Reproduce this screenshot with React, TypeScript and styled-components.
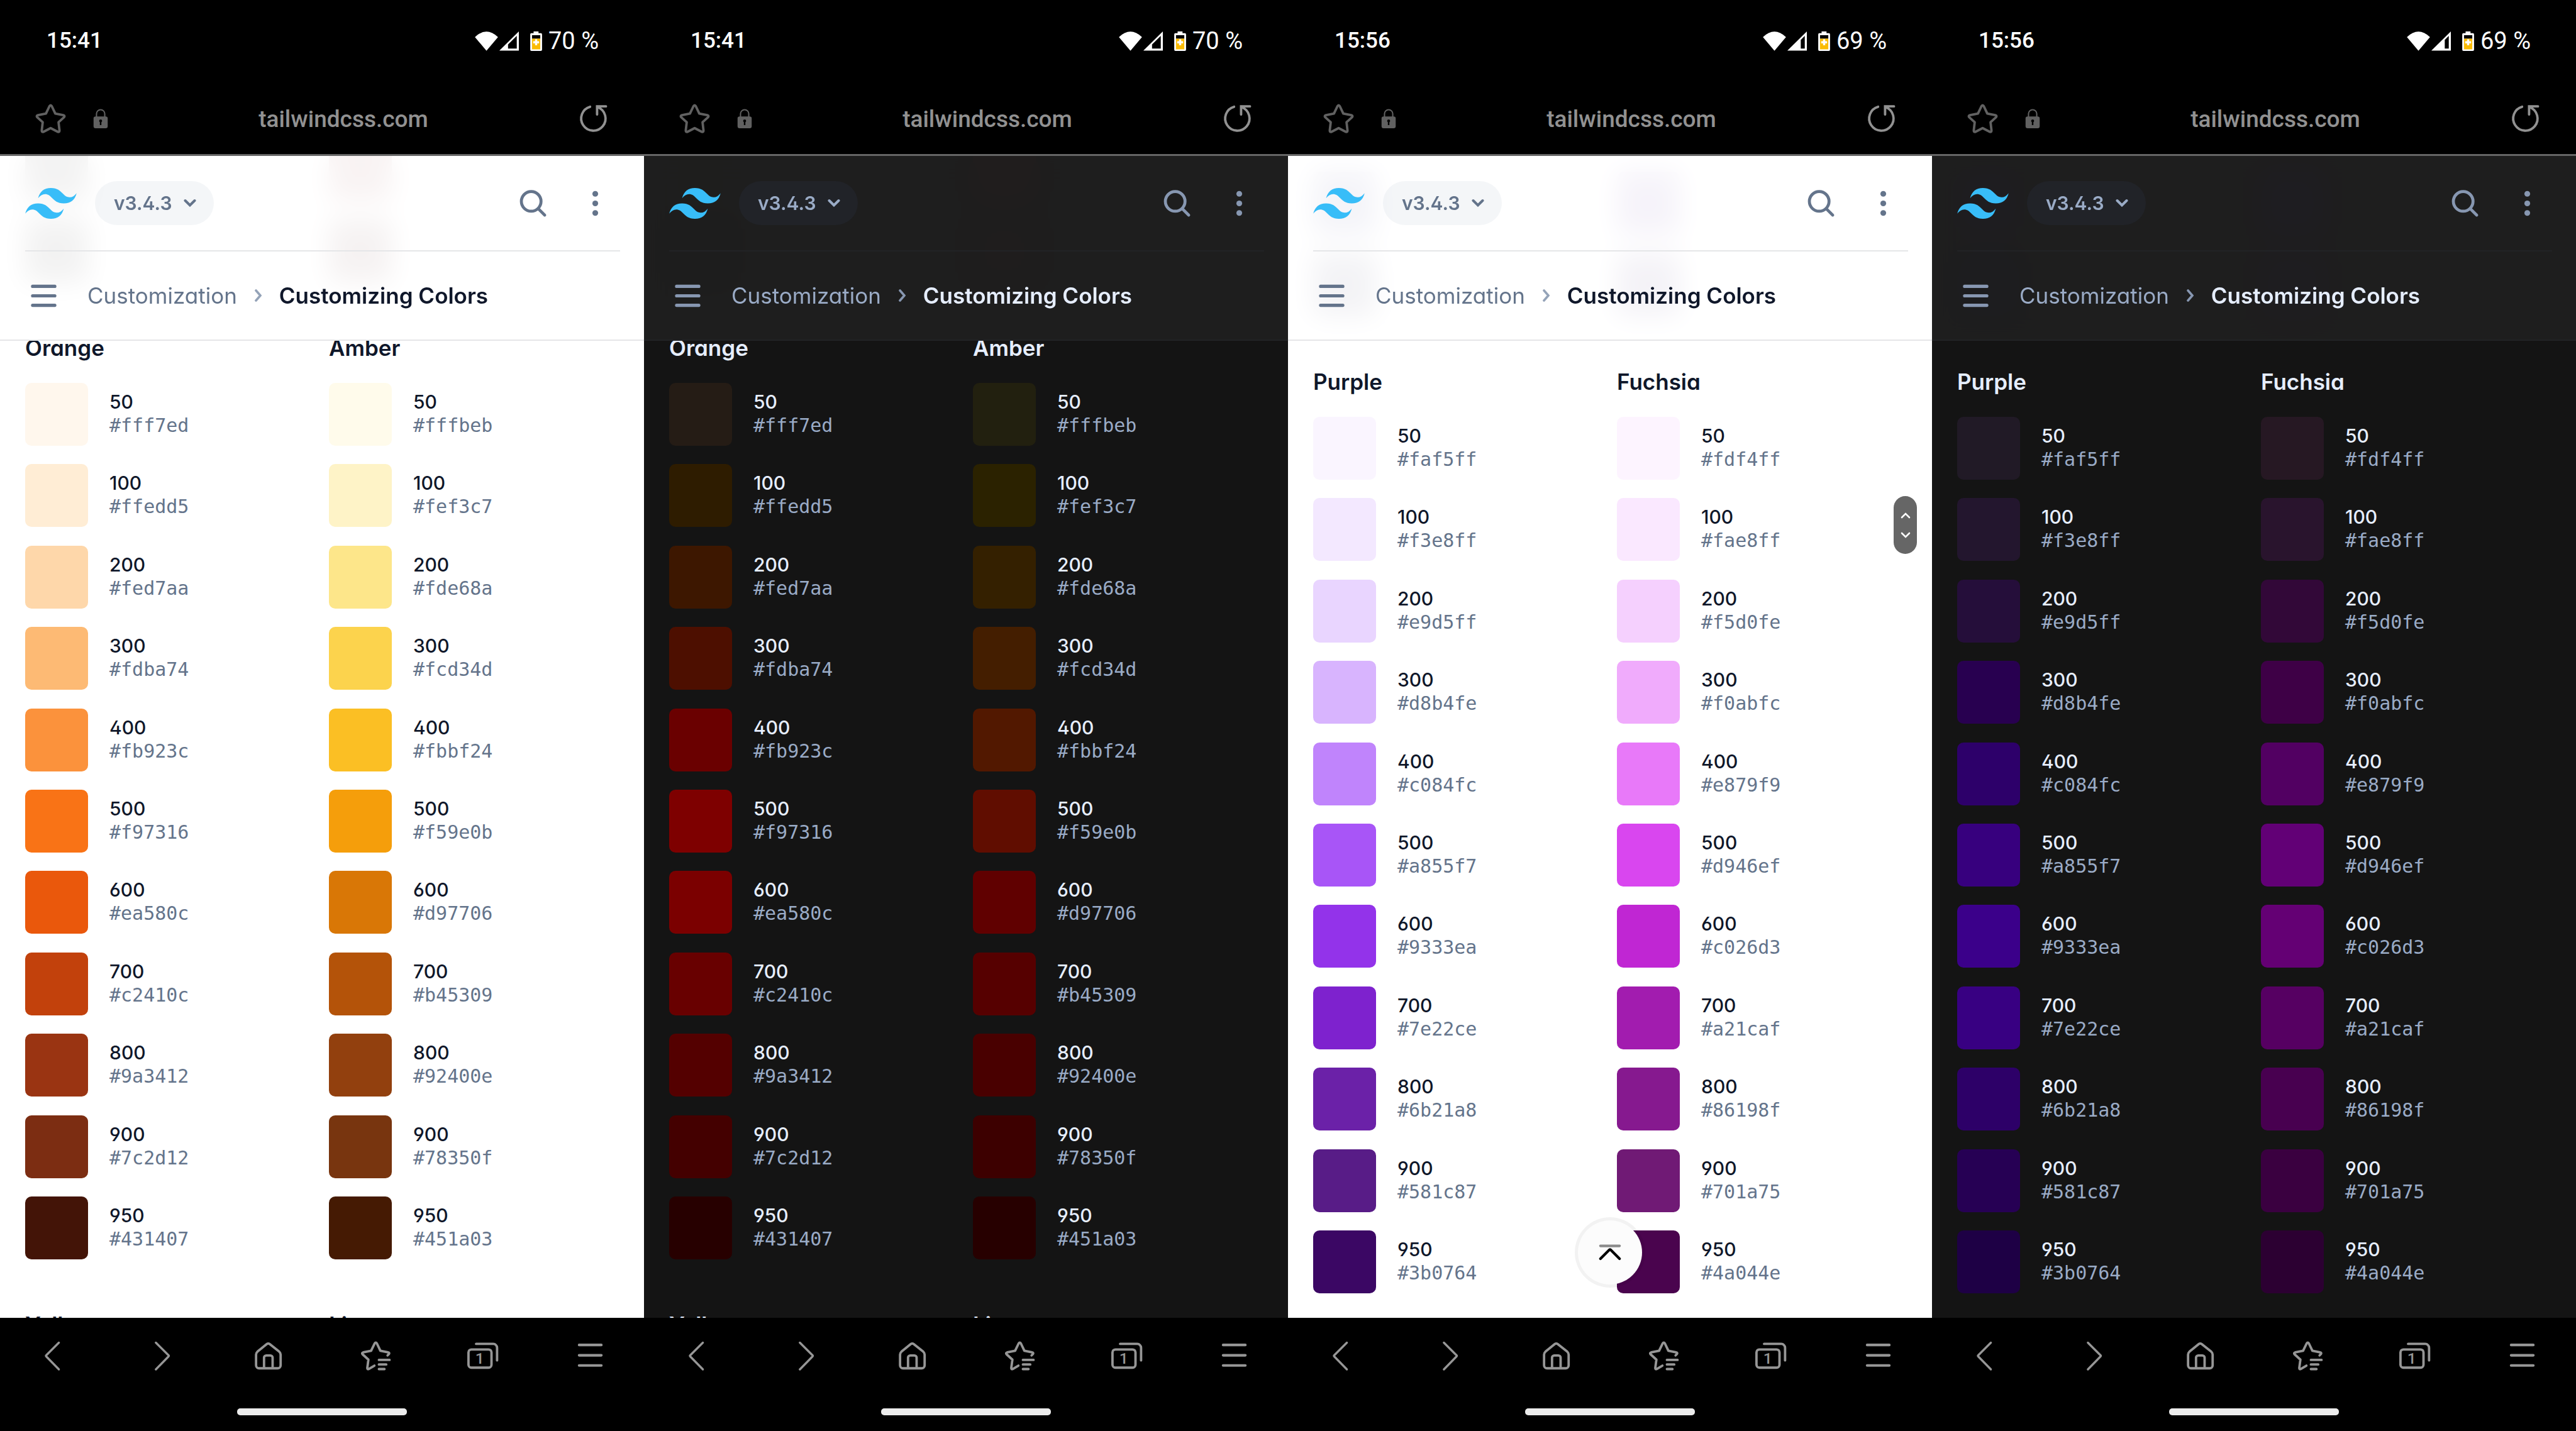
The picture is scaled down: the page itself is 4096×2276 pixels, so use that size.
import React from "react";
import styled, { createGlobalStyle, ThemeProvider } from "styled-components";

const GlobalStyle = createGlobalStyle`
  *, *::before, *::after { box-sizing: border-box; }
  body { margin: 0; background: #000; }
  button, input { font: inherit; color: inherit; background: none; border: 0; padding: 0; margin: 0; }
  ul, ol, h2 { margin: 0; padding: 0; list-style: none; }
  a { color: inherit; text-decoration: none; }
  svg { display: block; flex: none; }
`;

const SHADES = ["50", "100", "200", "300", "400", "500", "600", "700", "800", "900", "950"];

type Palette = { name: string; light: string[]; dark: string[] };

const orange: Palette = {
  name: "Orange",
  light: ["#fff7ed", "#ffedd5", "#fed7aa", "#fdba74", "#fb923c", "#f97316", "#ea580c", "#c2410c", "#9a3412", "#7c2d12", "#431407"],
  dark: ["#251c15", "#2e1c00", "#3d1700", "#4d0f00", "#6a0000", "#7e0000", "#7b0000", "#680000", "#540000", "#440000", "#270000"],
};
const amber: Palette = {
  name: "Amber",
  light: ["#fffbeb", "#fef3c7", "#fde68a", "#fcd34d", "#fbbf24", "#f59e0b", "#d97706", "#b45309", "#92400e", "#78350f", "#451a03"],
  dark: ["#22200f", "#2b2200", "#342000", "#441e00", "#521800", "#600d00", "#600000", "#560000", "#490000", "#3d0000", "#270000"],
};
const purple: Palette = {
  name: "Purple",
  light: ["#faf5ff", "#f3e8ff", "#e9d5ff", "#d8b4fe", "#c084fc", "#a855f7", "#9333ea", "#7e22ce", "#6b21a8", "#581c87", "#3b0764"],
  dark: ["#211a26", "#23162e", "#250e3a", "#280050", "#2d006a", "#37007e", "#3b008a", "#380082", "#2d0068", "#260054", "#1e0045"],
};
const fuchsia: Palette = {
  name: "Fuchsia",
  light: ["#fdf4ff", "#fae8ff", "#f5d0fe", "#f0abfc", "#e879f9", "#d946ef", "#c026d3", "#a21caf", "#86198f", "#701a75", "#4a044e"],
  dark: ["#261823", "#29142d", "#320838", "#3e0046", "#520062", "#620076", "#640074", "#560062", "#480050", "#3a0040", "#2c0032"],
};

const lightTheme = {
  mode: "light" as const,
  page: "#ffffff",
  header: "rgba(255, 255, 255, 0.95)",
  border: "#e5e6e8",
  pill: "rgba(148, 163, 184, 0.1)",
  strong: "#0f172a",
  muted: "#64748b",
  icon: "#64748b",
  faint: "#94a3b8",
};
const darkTheme = {
  mode: "dark" as const,
  page: "#141414",
  header: "rgba(31, 31, 31, 0.95)",
  border: "#222326",
  pill: "rgba(37, 41, 52, 0.5)",
  strong: "#e6eeff",
  muted: "#9aabc6",
  icon: "#8797b1",
  faint: "#8797b1",
};

/* ---------- layout ---------- */

const Screens = styled.main`
  display: grid;
  grid-template-columns: repeat(4, 1fr);
  height: 100vh;
`;

const Phone = styled.section`
  display: flex;
  flex-direction: column;
  min-width: 0;
  min-height: 0;
  background: #000;
`;

const StatusBar = styled.div`
  display: flex;
  align-items: center;
  justify-content: space-between;
  height: 132px;
  padding: 0 72px 2px 74px;
  color: #fff;
  font: 500 35px/40px Roboto, sans-serif;
`;

const StatusIcons = styled.div`
  display: flex;
  align-items: center;
  gap: 2px;
`;

const Battery = styled.span`
  display: flex;
  align-items: center;
  gap: 10px;
  padding-left: 16px;
  font-size: 38px;
  font-weight: 400;
`;

const AddressBar = styled.div`
  display: flex;
  align-items: center;
  height: 116px;
  padding: 0 50px;
  border-bottom: 3px solid #666;
  color: #616161;
`;

const LockSlot = styled.span`
  padding-left: 34px;
`;

const Url = styled.input`
  flex: 1;
  min-width: 0;
  height: 60px;
  padding: 2px 0 0 4px;
  color: #919191;
  font: 500 37px/44px Roboto, sans-serif;
  text-align: center;
  outline: 0;
`;

const ReloadButton = styled.button`
  color: #919191;
`;

const Viewport = styled.div`
  position: relative;
  flex: 1;
  min-height: 0;
  overflow: hidden;
  background: ${(p) => p.theme.page};
  font-family: Inter, sans-serif;
  font-feature-settings: "cv02", "cv03", "cv04", "cv11";
`;

const Header = styled.header`
  position: absolute;
  inset: 0 0 auto 0;
  background: ${(p) => p.theme.header};
  backdrop-filter: blur(21px);
  border-bottom: 2px solid ${(p) => p.theme.border};
  color: ${(p) => p.theme.icon};
`;

const TopRow = styled.div`
  display: flex;
  align-items: center;
  height: 152px;
  margin: 0 38px 0 40px;
  padding-right: 9px;
  border-bottom: 2px solid ${(p) => p.theme.border};
`;

const VersionButton = styled.button`
  display: flex;
  align-items: center;
  gap: 18px;
  height: 70px;
  margin: 0 auto 0 29px;
  padding: 0 28px 0 30px;
  border-radius: 35px;
  background: ${(p) => p.theme.pill};
  color: ${(p) => p.theme.muted};
  font-size: 30px;
  font-weight: 600;
  line-height: 50px;
`;

const MoreButton = styled.button`
  margin-left: 38px;
`;

const CrumbRow = styled.nav`
  display: flex;
  align-items: center;
  height: 140px;
  padding: 0 39px;
`;

const Crumbs = styled.ol`
  display: flex;
  align-items: center;
  padding-left: 39px;
  font-size: 35px;
  line-height: 60px;
  color: ${(p) => p.theme.muted};
  white-space: nowrap;
`;

const Crumb = styled.li<{ $current?: boolean }>`
  display: flex;
  align-items: center;
  gap: 28px;
  padding-right: 28px;
  color: ${(p) => (p.$current ? p.theme.strong : p.theme.muted)};
  font-weight: ${(p) => (p.$current ? 600 : 400)};
`;

const Columns = styled.div`
  display: grid;
  grid-template-columns: 1fr 1fr;
  column-gap: 20px;
  padding: 0 38px 0 40px;
`;

const Tail = styled.div<{ $height: number }>`
  display: flex;
  flex-direction: column;
  justify-content: flex-end;
  gap: 30px;
  height: ${(p) => p.$height}px;
  overflow: hidden;
`;

const PaletteName = styled.h2`
  margin-top: 74px;
  color: ${(p) => p.theme.strong};
  font-size: 35px;
  font-weight: 600;
  line-height: 60px;
`;

const ShadeList = styled.ul`
  display: flex;
  flex-direction: column;
  justify-content: space-between;
  min-height: 1394px;
  margin-top: 26px;
`;

const Shade = styled.li`
  display: flex;
  align-items: center;
  gap: 34px;
`;

const Swatch = styled.span<{ $color: string }>`
  flex: none;
  width: 100px;
  height: 100px;
  border-radius: 10px;
  background: ${(p) => p.$color};
`;

const Label = styled.span`
  display: flex;
  flex-direction: column;
  padding-bottom: 2px;
  font-size: 30px;
  line-height: 38px;
`;

const ShadeName = styled.span`
  color: ${(p) => p.theme.strong};
  font-weight: 500;
`;

const Hex = styled.code`
  color: ${(p) => p.theme.muted};
  font-family: "DejaVu Sans Mono", monospace;
`;

const ScrollThumb = styled.div`
  position: absolute;
  top: 541px;
  right: 24px;
  display: flex;
  align-items: center;
  justify-content: center;
  width: 37px;
  height: 92px;
  border-radius: 19px;
  background: #666;
  color: #fff;
`;

const TopButton = styled.button`
  position: absolute;
  bottom: 53px;
  left: calc(50% - 51px);
  display: flex;
  align-items: center;
  justify-content: center;
  width: 102px;
  height: 102px;
  border-radius: 50%;
  background: #fcfcfc;
  box-shadow: 0 0 0 5px rgba(0, 0, 0, 0.05);
`;

const BottomBar = styled.footer`
  display: flex;
  flex-direction: column;
  align-items: center;
  height: 180px;
  color: #969696;
`;

const Toolbar = styled.nav`
  display: grid;
  grid-template-columns: repeat(6, 1fr);
  align-self: stretch;
  height: 121px;
`;

const ToolButton = styled.button`
  display: flex;
  align-items: center;
  justify-content: center;
`;

const Handle = styled.div`
  width: 270px;
  height: 11px;
  margin-top: 23px;
  border-radius: 5px;
  background: #ebebeb;
`;

/* ---------- icons ---------- */

const Icon = ({ stroke = 4, children }: { stroke?: number; children: React.ReactNode }) => (
  <svg width="61" height="61" viewBox="0 0 64 64" fill="none" stroke="currentColor" strokeWidth={stroke} strokeLinecap="round" strokeLinejoin="round" aria-hidden="true">
    {children}
  </svg>
);

const WifiIcon = () => (
  <svg width="37" height="31" viewBox="0 0 39 33" fill="#fff" aria-hidden="true">
    <path d="M0 9.5Q19.5-9 39 9.5L19.5 32.7z" />
  </svg>
);

const SignalIcon = ({ full }: { full: boolean }) => (
  <svg width="31" height="31" viewBox="0 0 33 33" aria-hidden="true">
    <path d="M0 32.5L33 0v32.5z" fill="#fff" />
    <path d={full ? "M22.7 28.9V14.3l6.8-6.8v21.4z" : "M14.7 28.9V22l14.8-14.5v21.4z"} fill="#000" />
  </svg>
);

const BatteryIcon = () => (
  <svg width="19" height="31" viewBox="0 0 20 33" aria-hidden="true">
    <path d="M5.7 0h8.3v3H18a2 2 0 0 1 2 2v26a2 2 0 0 1-2 2H2a2 2 0 0 1-2-2V5a2 2 0 0 1 2-2h3.7z" fill="#fff" />
    <path d="M3 6.3h14v6H3z" fill="#000" />
    <path d="M3 12.3h14v18H3z" fill="#fbbc04" />
    <path d="M8.2 13.2h3.6v3.3H15v3.6h-3.2v3.3H8.2v-3.3H5v-3.6h3.2z" fill="#fff" />
  </svg>
);

const StarIcon = () => (
  <Icon>
    <path d="M34 11.5L39.8 23.8L53 26.3Q56.6 27.4 54.2 30L45.2 38.2L46.8 52Q46.8 55.6 43.6 54L32 48L20.4 54Q17.2 55.6 17.2 52L18.8 38.2L9.8 30Q7.4 27.4 11 26.3L24.2 23.8L30 11.5Q32 8 34 11.5z" />
  </Icon>
);

const LockIcon = () => (
  <svg width="30" height="34" viewBox="0 0 32 36" aria-hidden="true">
    <path d="M9 15V9.5a7 7 0 0 1 14 0V15" fill="none" stroke="#616161" strokeWidth="2.2" />
    <rect x="4" y="14" width="24" height="20" rx="3.5" fill="#616161" />
    <circle cx="16" cy="21.4" r="2.4" fill="#000" />
    <path d="M14.7 21h2.6v7.6h-2.6z" fill="#000" />
  </svg>
);

const ReloadIcon = () => (
  <Icon>
    <path d="M39.5 13.1A20.3 20.3 0 1 1 26.5 12.4" />
    <path d="M53 11.7H38.2V25.3" strokeLinejoin="miter" />
  </Icon>
);

const Logo = () => (
  <svg width="82" height="49" viewBox="0 0 54 32.4" fill="#38bdf8" role="img" aria-label="Tailwind CSS">
    <path d="M27 0c-7.2 0-11.7 3.6-13.5 10.8 2.7-3.6 5.85-4.95 9.45-4.05 2.054.513 3.522 2.004 5.147 3.653C30.744 13.09 33.808 16.2 40.5 16.2c7.2 0 11.7-3.6 13.5-10.8-2.7 3.6-5.85 4.95-9.45 4.05-2.054-.513-3.522-2.004-5.147-3.653C36.756 3.11 33.692 0 27 0zM13.5 16.2C6.3 16.2 1.8 19.8 0 27c2.7-3.6 5.85-4.95 9.45-4.05 2.054.514 3.522 2.004 5.147 3.653C17.244 29.29 20.308 32.4 27 32.4c7.2 0 11.7-3.6 13.5-10.8-2.7 3.6-5.85 4.95-9.45 4.05-2.054-.513-3.522-2.004-5.147-3.653C23.256 19.31 20.192 16.2 13.5 16.2z" />
  </svg>
);

const ChevronDown = () => (
  <svg width="20" height="14" viewBox="0 0 20 14" fill="none" stroke="currentColor" strokeWidth="4" strokeLinecap="round" aria-hidden="true">
    <path d="M2.5 3L10 10.5L17.5 3" />
  </svg>
);

const CrumbChevron = styled.svg`
  color: ${(p) => p.theme.faint};
`;

const ChevronRight = () => (
  <CrumbChevron width="11" height="20" viewBox="0 0 11 20" fill="none" stroke="currentColor" strokeWidth="3.6" strokeLinecap="round" aria-hidden="true">
    <path d="M2 2L9 10L2 18" />
  </CrumbChevron>
);

const SearchIcon = () => (
  <Icon stroke={5}>
    <circle cx="29" cy="28.7" r="16.4" />
    <path d="M41 41L51.5 51.5" />
  </Icon>
);

const MoreIcon = () => (
  <Icon>
    <g fill="currentColor" stroke="none">
      <circle cx="32" cy="16" r="4.8" />
      <circle cx="32" cy="32" r="4.8" />
      <circle cx="32" cy="48" r="4.8" />
    </g>
  </Icon>
);

const MenuIcon = () => (
  <Icon stroke={5.4}>
    <path d="M13.5 16.2h37M13.5 32h37M13.5 47.8h37" />
  </Icon>
);

const BackIcon = () => (
  <Icon stroke={3.6}>
    <path d="M40.5 10L19.5 31q-1 1 0 2L40.5 54.5" />
  </Icon>
);

const ForwardIcon = () => (
  <Icon stroke={3.6}>
    <path d="M24 10L45 31q1 1 0 2L24 54.5" />
  </Icon>
);

const HomeIcon = () => (
  <Icon>
    <path d="M52.7 30V47.7a5 5 0 0 1-5 5H16.7a5 5 0 0 1-5-5V30q0-3 2.3-5L29.5 12.4q2.5-2 5 0L50.4 25q2.3 2 2.3 5z" />
    <path d="M25 52V35a3.7 3.7 0 0 1 3.7-3.7h6.9a3.7 3.7 0 0 1 3.7 3.7V52" />
  </Icon>
);

const BookmarksIcon = () => (
  <Icon>
    <path d="M51.7 31.3L54 28.8Q55.4 26.6 52.6 26.1L39.7 23.5L34 11.5Q32 8.4 30 11.5L24.2 23.5L11 26.2Q8 27.2 10 29.4L19.7 38.3L17.8 52.4Q18 55 20.4 53.8L29.7 48.3" />
    <path d="M37.2 38.7H55M37.2 46.3H49.5M37.2 54H46.5" />
  </Icon>
);

const TabsIcon = () => (
  <Icon>
    <rect x="8.3" y="21.3" width="38.4" height="30.4" rx="5" />
    <path d="M21 12H49.5a6.5 6.5 0 0 1 6.5 6.5V39.5" />
    <text x="27" y="45.6" fill="currentColor" stroke="none" textAnchor="middle" fontFamily="Roboto, sans-serif" fontSize="26" fontWeight="500">
      1
    </text>
  </Icon>
);

const ListIcon = () => (
  <Icon stroke={4.4}>
    <path d="M13.5 13.8h37M13.5 31h37M13.5 48h37" />
  </Icon>
);

/* ---------- screens ---------- */

type ScreenProps = {
  theme: typeof lightTheme | typeof darkTheme;
  time: string;
  charge: string;
  fullSignal: boolean;
  palettes: [Palette, Palette];
  tails: [string[], string[]];
  tailHeight: number;
  next?: [string, string];
  controls?: boolean;
};

const Screen = ({ theme, time, charge, fullSignal, palettes, tails, tailHeight, next, controls }: ScreenProps) => (
  <ThemeProvider theme={theme}>
    <Phone>
      <StatusBar>
        <time>{time}</time>
        <StatusIcons>
          <WifiIcon />
          <SignalIcon full={fullSignal} />
          <Battery>
            <BatteryIcon />
            {charge}
          </Battery>
        </StatusIcons>
      </StatusBar>
      <AddressBar>
        <button type="button" aria-label="Bookmark"><StarIcon /></button>
        <LockSlot><LockIcon /></LockSlot>
        <Url type="text" aria-label="Address" defaultValue="tailwindcss.com" />
        <ReloadButton type="button" aria-label="Reload"><ReloadIcon /></ReloadButton>
      </AddressBar>
      <Viewport>
        <Columns>
          {tails.map((colors, i) => (
            <Tail key={i} $height={tailHeight}>
              {colors.map((c) => <Swatch key={c} $color={c} />)}
            </Tail>
          ))}
          {palettes.map((p) => (
            <article key={p.name}>
              <PaletteName>{p.name}</PaletteName>
              <ShadeList>
                {SHADES.map((s, i) => (
                  <Shade key={s}>
                    <Swatch $color={p[theme.mode][i]} />
                    <Label>
                      <ShadeName>{s}</ShadeName>
                      <Hex>{p.light[i]}</Hex>
                    </Label>
                  </Shade>
                ))}
              </ShadeList>
            </article>
          ))}
          {next?.map((n) => <PaletteName key={n}>{n}</PaletteName>)}
        </Columns>
        <Header>
          <TopRow>
            <a href="#home"><Logo /></a>
            <VersionButton type="button">v3.4.3<ChevronDown /></VersionButton>
            <button type="button" aria-label="Search"><SearchIcon /></button>
            <MoreButton type="button" aria-label="More"><MoreIcon /></MoreButton>
          </TopRow>
          <CrumbRow>
            <button type="button" aria-label="Navigation"><MenuIcon /></button>
            <Crumbs>
              <Crumb><a href="#customization">Customization</a><ChevronRight /></Crumb>
              <Crumb $current>Customizing Colors</Crumb>
            </Crumbs>
          </CrumbRow>
        </Header>
        {controls && (
          <>
            <ScrollThumb>
              <svg width="16" height="46" viewBox="0 0 16 46" fill="none" stroke="currentColor" strokeWidth="2.6" strokeLinecap="round" aria-hidden="true">
                <path d="M2 11L8 5L14 11M2 36L8 42L14 36" />
              </svg>
            </ScrollThumb>
            <TopButton type="button" aria-label="Go to top">
              <svg width="36" height="28" viewBox="0 0 38 28" fill="none" strokeWidth="4.4" strokeLinecap="round" strokeLinejoin="round" aria-hidden="true">
                <path d="M3 3h32" stroke="#8c8c8c" />
                <path d="M3 24.5L18 9.6q1-1 2 0L35 24.5" stroke="#000" />
              </svg>
            </TopButton>
          </>
        )}
      </Viewport>
      <BottomBar>
        <Toolbar>
          <ToolButton type="button" aria-label="Back"><BackIcon /></ToolButton>
          <ToolButton type="button" aria-label="Forward"><ForwardIcon /></ToolButton>
          <ToolButton type="button" aria-label="Home"><HomeIcon /></ToolButton>
          <ToolButton type="button" aria-label="Bookmarks"><BookmarksIcon /></ToolButton>
          <ToolButton type="button" aria-label="Tabs"><TabsIcon /></ToolButton>
          <ToolButton type="button" aria-label="Menu"><ListIcon /></ToolButton>
        </Toolbar>
        <Handle />
      </BottomBar>
    </Phone>
  </ThemeProvider>
);

const warm = {
  time: "15:41",
  charge: "70 %",
  fullSignal: false,
  palettes: [orange, amber] as [Palette, Palette],
  tailHeight: 201,
  next: ["Yellow", "Lime"] as [string, string],
};
const cool = {
  time: "15:56",
  charge: "69 %",
  fullSignal: true,
  palettes: [purple, fuchsia] as [Palette, Palette],
  tailHeight: 255,
};

export default function App() {
  return (
    <>
      <GlobalStyle />
      <Screens>
        <Screen {...warm} theme={lightTheme} tails={[["#1c1917", "#0c0a09"], ["#7f1d1d", "#450a0a"]]} />
        <Screen {...warm} theme={darkTheme} tails={[["#161412", "#0c0a09"], ["#480000", "#280000"]]} />
        <Screen {...cool} theme={lightTheme} tails={[["#312e81", "#1e1b4b"], ["#4c1d95", "#2e1065"]]} controls />
        <Screen {...cool} theme={darkTheme} tails={[["#14104a", "#0c0a34"], ["#1d0058", "#180044"]]} />
      </Screens>
    </>
  );
}
